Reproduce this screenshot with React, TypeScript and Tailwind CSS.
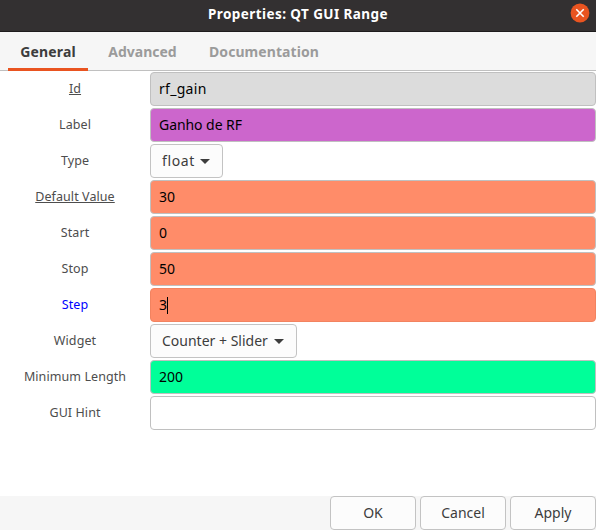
import type { ReactNode } from 'react';

type Row = {
  label: string;
  labelClass?: string;
  value: string;
  valueClass?: string;
  kind?: 'entry' | 'select';
  boxClass: string;
  focused?: boolean;
};

const rows: Row[] = [
  { label: 'Id', labelClass: 'text-[#4d4d4d] underline underline-offset-1', value: 'rf_gain', valueClass: 'tracking-[0.3px]', boxClass: 'border-[#c0c0c0] bg-[#dcdcdc]' },
  { label: 'Label', value: 'Ganho de RF', valueClass: 'tracking-[-0.06px]', boxClass: 'border-[#c0c0c0] bg-[#cc66cc]' },
  { label: 'Type', value: 'float', valueClass: 'tracking-[0.6px]', kind: 'select', boxClass: 'w-[73px]' },
  { label: 'Default Value', labelClass: 'text-[#4d4d4d] underline underline-offset-1', value: '30', boxClass: 'border-[#c0c0c0] bg-[#ff8c69]' },
  { label: 'Start', value: '0', boxClass: 'border-[#c0c0c0] bg-[#ff8c69]' },
  { label: 'Stop', value: '50', boxClass: 'border-[#c0c0c0] bg-[#ff8c69]' },
  { label: 'Step', labelClass: 'text-[#0000ff]', value: '3', boxClass: 'border-[#f28360] bg-[#ff8c69]', focused: true },
  { label: 'Widget', value: 'Counter + Slider', kind: 'select', boxClass: 'w-[147px]' },
  { label: 'Minimum Length', value: '200', boxClass: 'border-[#c0c0c0] bg-[#00ff99]' },
  { label: 'GUI Hint', value: '', boxClass: 'border-[#c0c0c0] bg-white' },
];

function Button({ children }: { children: ReactNode }) {
  return (
    <button className="h-[34px] w-[86px] rounded-[4px] border border-[#c3c3c3] bg-[#fcfcfc] pb-px text-[14px] text-[#3d3d3d]">
      {children}
    </button>
  );
}

function Field({ row }: { row: Row }) {
  if (row.kind === 'select') {
    return (
      <button className={`flex h-[34px] items-center justify-between rounded-[4px] border border-[#c3c3c3] bg-[#fcfcfc] pr-[12px] pl-[11px] text-[14px] whitespace-nowrap text-[#3d3d3d] ${row.boxClass}`}>
        <span className={`pb-[2px] ${row.valueClass ?? ''}`}>{row.value}</span>
        <svg width="10" height="5" viewBox="0 0 10 5" fill="#3d3d3d"><path d="M0 0h10L5 5z" /></svg>
      </button>
    );
  }
  return (
    <div className={`flex h-[34px] flex-1 items-center rounded-[4px] border pl-2 text-[14px] text-black ${row.boxClass}`}>
      <span className={`pb-[2px] ${row.valueClass ?? ''}`}>{row.value}</span>
      {row.focused && <span className="h-[17px] w-px bg-black" />}
    </div>
  );
}

export default function App() {
  return (
    <div className="flex h-[530px] w-[596px] flex-col overflow-hidden bg-white font-['Noto_Sans',sans-serif]">
      <header className="grid h-8 shrink-0 grid-cols-[1fr_auto_1fr] items-start border-b border-[#1e1c1d] bg-[#333031]">
        <span />
        <h1 className="pt-1 text-[13.5px] leading-5 font-bold tracking-[0.42px] text-white">Properties: QT GUI Range</h1>
        <svg className="mt-[3px] mr-[6px] justify-self-end" width="20" height="20" viewBox="0 0 20 20">
          <circle cx="10" cy="10" r="9.4" fill="#e95420" />
          <path d="M6.3 6.3l7.4 7.4M13.7 6.3l-7.4 7.4" stroke="white" strokeWidth="1.6" />
        </svg>
      </header>
      <nav className="flex h-[39px] shrink-0 border-b border-[#c0c0c0] bg-[#f6f6f6] pl-2 text-[14px] font-bold text-[#9b9b9b]">
        <div className="-mb-px flex w-20 items-center justify-center border-b-3 border-[#e95420] text-[#3d3d3d]"><span className="pt-[2px] tracking-[0.15px]">General</span></div>
        <div className="ml-2 flex w-[93px] items-center justify-center"><span>Advanced</span></div>
        <div className="ml-2 flex w-[134px] items-center justify-center"><span className="tracking-[0.08px]">Documentation</span></div>
      </nav>
      <main className="flex flex-1 flex-col gap-[2px] pt-px">
        {rows.map((row) => (
          <div key={row.label} className="flex h-[34px]">
            <div className={`flex w-[150px] items-center justify-center text-[12.5px] tracking-[0.08px] ${row.labelClass ?? 'text-[#4d4d4d]'}`}><span>{row.label}</span></div>
            <Field row={row} />
          </div>
        ))}
      </main>
      <footer className="flex h-[34px] shrink-0 justify-end gap-1 bg-[#f6f6f6]">
        <Button>OK</Button>
        <Button>Cancel</Button>
        <Button>Apply</Button>
      </footer>
    </div>
  );
}
